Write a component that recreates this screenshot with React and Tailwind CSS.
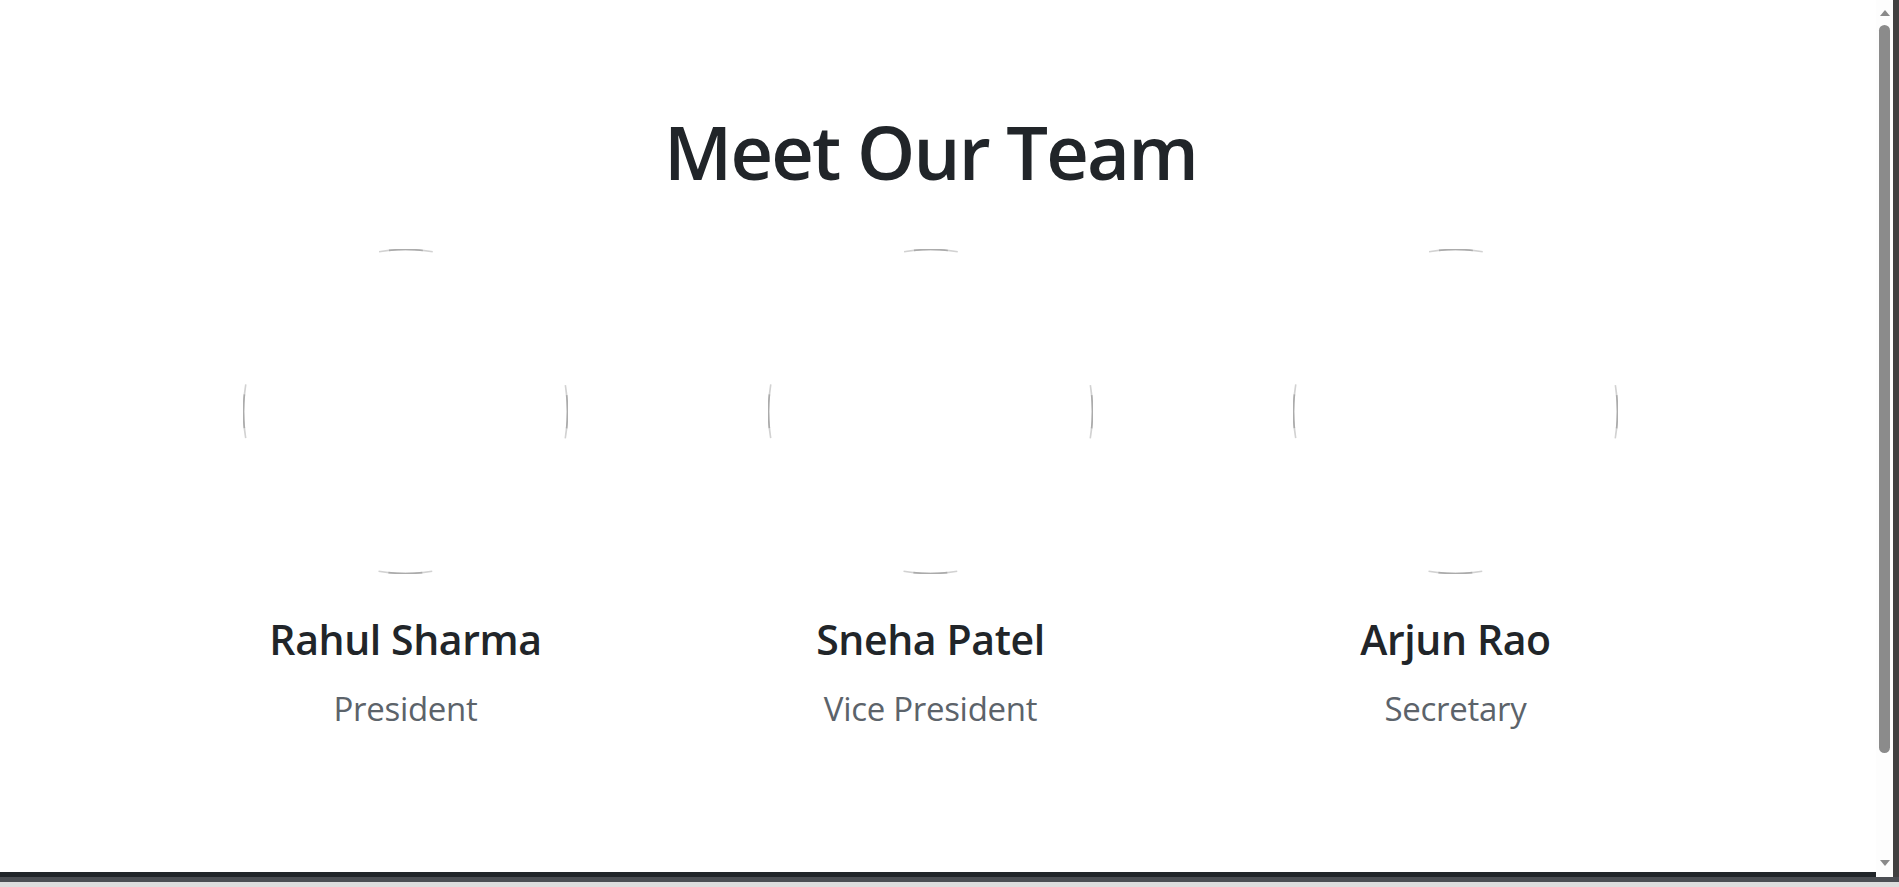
import React from 'react';

const team = [
  { name: 'Rahul Sharma', role: 'President' },
  { name: 'Sneha Patel', role: 'Vice President' },
  { name: 'Arjun Rao', role: 'Secretary' },
];

// empty round photo frame: only the four flat edges of the ring show
const PhotoRing = () => (
  <svg width="325" height="325" viewBox="0 0 325 325" className="block">
    <circle
      cx="162.5"
      cy="162.5"
      r="162"
      fill="none"
      stroke="#d2d2d2"
      strokeWidth="1.6"
      strokeDasharray="54 200.5"
      strokeDashoffset="27"
    />
    <circle
      cx="162.5"
      cy="162.5"
      r="162"
      fill="none"
      stroke="#ababab"
      strokeWidth="1.6"
      strokeDasharray="34 220.5"
      strokeDashoffset="17"
    />
  </svg>
);

const MemberCard = ({ member }) => (
  <div className="flex flex-col items-center text-center">
    <PhotoRing />
    <h3 className="mt-[45px] text-[41px] leading-none font-semibold tracking-[-0.4px] text-[#212529]">
      {member.name}
    </h3>
    <p className="mt-[32px] text-[33px] leading-none tracking-[-0.3px] text-[#5c636a]">
      {member.role}
    </p>
  </div>
);

const Scrollbar = () => (
  <div className="w-[17px] bg-[#fdfdfd] flex flex-col items-center rounded-tr-[6px] rounded-br-[6px]">
    <div className="mt-[10px] w-0 h-0 border-l-[5px] border-r-[5px] border-b-[6px] border-l-transparent border-r-transparent border-b-[#8a8a8a]" />
    <div className="mt-[9px] w-[11px] h-[728px] rounded-full bg-[#8b8b8b]" />
    <div className="flex-1" />
    <div className="mb-[11px] w-0 h-0 border-l-[5px] border-r-[5px] border-t-[6px] border-l-transparent border-r-transparent border-t-[#8a8a8a]" />
  </div>
);

export default function App() {
  return (
    <div
      className="h-[887px] flex flex-col overflow-hidden bg-white"
      style={{ fontFamily: '"Open Sans", "Noto Sans", sans-serif' }}
    >
      <div className="flex flex-1 min-h-0">
        <div className="flex-1 flex flex-col">
          <main className="flex-1 bg-white">
            <div className="ml-[143px] w-[1575px] pt-[115px]">
              <h1 className="text-center text-[74px] leading-none font-semibold tracking-[-1.8px] text-[#212529]">
                Meet Our Team
              </h1>
              <div className="grid grid-cols-3 mt-[60px]">
                {team.map((m) => (
                  <MemberCard key={m.name} member={m} />
                ))}
              </div>
            </div>
          </main>
          <div className="h-[5px] bg-[#212529]" />
        </div>
        <Scrollbar />
        <div className="w-[6px] bg-[#404040]" />
      </div>
      <div className="h-[5px] bg-[#4b4e53]" />
      <div className="h-[5px] bg-[#dddddd]" />
    </div>
  );
}
